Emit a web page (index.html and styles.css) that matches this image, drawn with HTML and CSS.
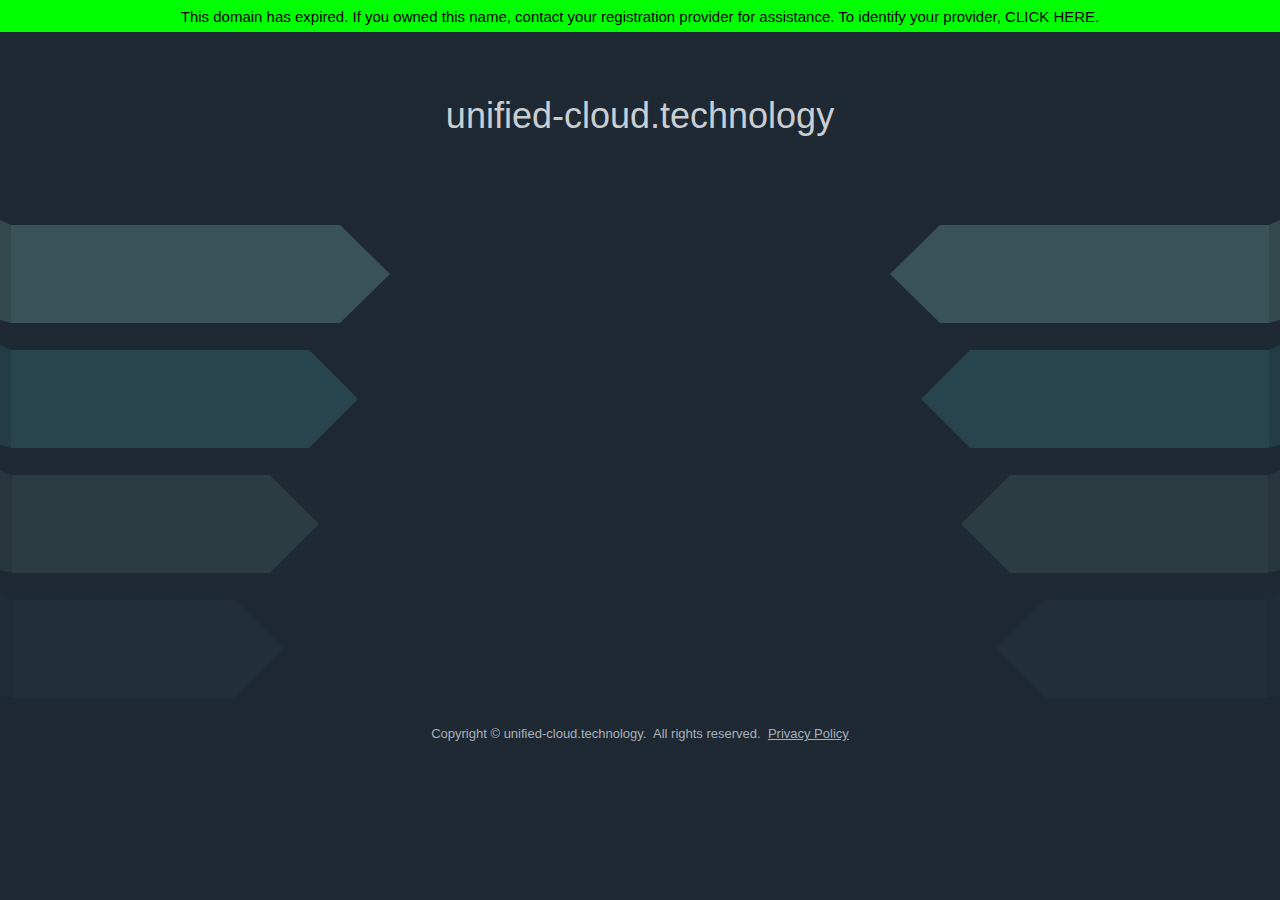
FILE: index.html
```html
<!DOCTYPE html>
<html lang="en">
<head>
<meta charset="utf-8">
<title>unified-cloud.technology</title>
<link rel="stylesheet" href="styles.css">
</head>
<body>
<div class="banner">This domain has expired. If you owned this name, contact your registration provider for assistance. To identify your provider, CLICK HERE.</div>
<h1 class="title">unified-cloud.technology</h1>
<div class="arrows">
  <div class="row r1">
    <svg class="arrow" width="390" height="108" viewBox="0 0 390 108"><polygon class="strip" points="0,0 11,5 11,103 0,100"/><polygon class="body" points="11,5 340,5 390,54 340,103 11,103"/></svg>
    <svg class="arrow" width="390" height="108" viewBox="0 0 390 108"><polygon class="strip" points="390,0 379,5 379,103 390,100"/><polygon class="body" points="379,5 50,5 0,54 50,103 379,103"/></svg>
  </div>
  <div class="row r2">
    <svg class="arrow" width="358" height="108" viewBox="0 0 358 108"><polygon class="strip" points="0,0 11,5 11,103 0,100"/><polygon class="body" points="11,5 309,5 358,54 309,103 11,103"/></svg>
    <svg class="arrow" width="359" height="108" viewBox="0 0 359 108"><polygon class="strip" points="359,0 348,5 348,103 359,100"/><polygon class="body" points="348,5 49,5 0,54 49,103 348,103"/></svg>
  </div>
  <div class="row r3">
    <svg class="arrow" width="319" height="108" viewBox="0 0 319 108"><polygon class="strip" points="0,0 12,5 12,103 0,100"/><polygon class="body" points="12,5 270,5 319,54 270,103 12,103"/></svg>
    <svg class="arrow" width="319" height="108" viewBox="0 0 319 108"><polygon class="strip" points="319,0 307,5 307,103 319,100"/><polygon class="body" points="307,5 49,5 0,54 49,103 307,103"/></svg>
  </div>
  <div class="row r4">
    <svg class="arrow" width="284" height="108" viewBox="0 0 284 108"><polygon class="strip" points="0,0 13,5 13,103 0,100"/><polygon class="body" points="13,5 235,5 284,54 235,103 13,103"/></svg>
    <svg class="arrow" width="284" height="108" viewBox="0 0 284 108"><polygon class="strip" points="284,0 271,5 271,103 284,100"/><polygon class="body" points="271,5 49,5 0,54 49,103 271,103"/></svg>
  </div>
</div>
<div class="footer">Copyright © unified-cloud.technology.&nbsp; All rights reserved.&nbsp; <a href="#">Privacy Policy</a></div>
</body>
</html>
```
FILE: styles.css
```css
html, body {
  margin: 0;
  padding: 0;
}
body {
  background: #1e2934;
  font-family: "Liberation Sans", Arial, Helvetica, sans-serif;
  width: 1280px;
  height: 900px;
  overflow: hidden;
}
.banner {
  background: #00ff00;
  color: #000;
  height: 32px;
  line-height: 33px;
  font-size: 15px;
  text-align: center;
}
.title {
  margin: 62px 0 0;
  height: 44px;
  line-height: 44px;
  font-size: 36px;
  font-weight: normal;
  color: #c9ced3;
  text-align: center;
}
.arrows {
  margin-top: 82px;
  display: flex;
  flex-direction: column;
  gap: 17px;
}
.row {
  display: flex;
  justify-content: space-between;
  height: 108px;
}
.arrow {
  display: block;
}
.r1 .body { fill: #3a5358; }
.r1 .strip { fill: #33494e; }
.r2 .body { fill: #27444f; }
.r2 .strip { fill: #243c46; }
.r3 .body { fill: #2b3d43; }
.r3 .strip { fill: #28373e; }
.r4 .body { fill: #222f39; }
.r4 .strip { fill: #212d36; }
.footer {
  margin-top: 23px;
  text-align: center;
  font-size: 13px;
  color: #a9b0b6;
}
.footer a {
  color: #a9b0b6;
  text-decoration: underline;
}
```
